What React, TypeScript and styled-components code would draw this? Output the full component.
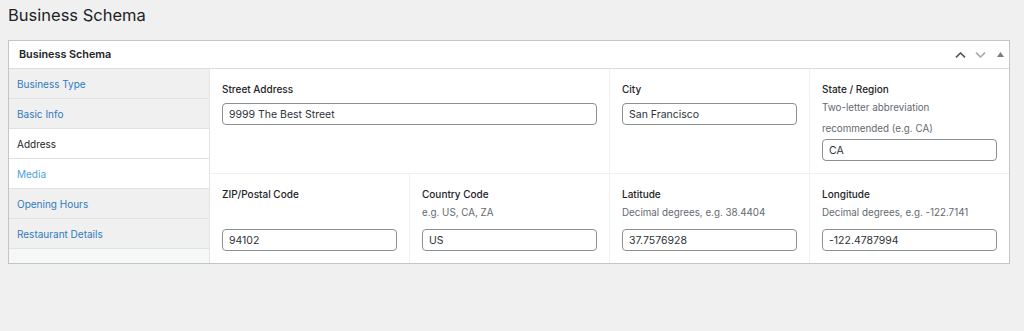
import React from "react";
import styled, { createGlobalStyle } from "styled-components";

const GlobalStyle = createGlobalStyle`
  body {
    margin: 0;
    background: #f0f0f1;
    font-family: Inter, "Liberation Sans", sans-serif;
    color: #1d2327;
  }
`;

const Page = styled.div`
  padding: 0 14px 0 8px;
`;

const Title = styled.h1`
  margin: 0;
  height: 40px;
  padding-top: 5px;
  box-sizing: border-box;
  font-size: 16.5px;
  font-weight: 400;
  line-height: 20px;
  color: #1d2327;
`;

const Box = styled.div`
  width: 1002px;
  box-sizing: border-box;
  background: #fff;
  border: 1px solid #c3c4c7;
`;

const BoxHeader = styled.div`
  height: 28px;
  box-sizing: border-box;
  display: flex;
  align-items: center;
  padding-left: 10px;
  border-bottom: 1px solid #dcdcde;
`;

const BoxTitle = styled.h2`
  flex: 1;
  margin: 0;
  font-size: 10.8px;
  font-weight: 600;
`;

const HeaderButtons = styled.div`
  display: flex;
  align-items: center;
  gap: 8px;
  padding-right: 3px;
`;

const IconButton = styled.span<{ $color: string }>`
  display: flex;
  width: 12px;
  height: 12px;
  align-items: center;
  justify-content: center;
  color: ${(p) => p.$color};
`;

const Body = styled.div`
  display: flex;
`;

const Tabs = styled.ul`
  list-style: none;
  margin: 0;
  padding: 0;
  width: 201px;
  box-sizing: border-box;
  border-right: 1px solid #e4e4e7;
  background: #f6f7f7;
`;

const Tab = styled.li<{ $active?: boolean; $hover?: boolean }>`
  height: 30px;
  box-sizing: border-box;
  display: flex;
  align-items: center;
  padding-left: 8px;
  font-size: 10px;
  border-bottom: 1px solid #e2e2e4;
  background: ${(p) => (p.$active || p.$hover ? "#fff" : "#f0f0f1")};
  color: ${(p) => (p.$active ? "#1d2327" : p.$hover ? "#4aa3df" : "#2f7bbd")};
`;

const Grid = styled.div`
  flex: 1;
  display: grid;
  grid-template-columns: 200px 200px 200px 1fr;
  grid-template-rows: auto 89px;
`;

const Cell = styled.div<{ $span?: number; $last?: boolean; $bottom?: boolean }>`
  grid-column: span ${(p) => p.$span ?? 1};
  display: flex;
  flex-direction: column;
  padding: 12px 12px 12px;
  box-sizing: border-box;
  border-right: ${(p) => (p.$last ? "none" : "1px solid #f0f0f1")};
  border-bottom: ${(p) => (p.$bottom ? "none" : "1px solid #f0f0f1")};
`;

const Label = styled.label`
  font-size: 10px;
  font-weight: 500;
  line-height: 16px;
  color: #1d2327;
`;

const Hint = styled.p`
  margin: 0;
  min-height: 21px;
  font-size: 9.8px;
  line-height: 21px;
  color: #646970;
`;

const Input = styled.input<{ $gap: string }>`
  margin-top: ${(p) => p.$gap};
  height: 22px;
  width: 100%;
  box-sizing: border-box;
  border: 1px solid #8c8f94;
  border-radius: 4px;
  padding: 0 6px;
  font-family: Inter, "Liberation Sans", sans-serif;
  font-size: 10.5px;
  color: #2c3338;
  background: #fff;
`;

type FieldProps = {
  label: string;
  value: string;
  hint?: React.ReactNode;
  span?: number;
  last?: boolean;
  bottom?: boolean;
};

const Field = ({ label, value, hint, span, last, bottom }: FieldProps) => (
  <Cell $span={span} $last={last} $bottom={bottom}>
    <Label>{label}</Label>
    {bottom ? <Hint>{hint}</Hint> : hint && <Hint>{hint}</Hint>}
    <Input
      $gap={bottom ? "auto" : hint ? "0" : "6px"}
      defaultValue={value}
    />
  </Cell>
);

const tabs = [
  "Business Type",
  "Basic Info",
  "Address",
  "Media",
  "Opening Hours",
  "Restaurant Details",
];

export default function App() {
  return (
    <Page>
      <GlobalStyle />
      <Title>Business Schema</Title>
      <Box>
        <BoxHeader>
          <BoxTitle>Business Schema</BoxTitle>
          <HeaderButtons>
            <IconButton $color="#50575e">
              <svg width="11" height="6" viewBox="0 0 11 6">
                <path d="M1 5.3 5.5 1 10 5.3" fill="none" stroke="currentColor" strokeWidth="1.6" />
              </svg>
            </IconButton>
            <IconButton $color="#a7aaad">
              <svg width="11" height="6" viewBox="0 0 11 6">
                <path d="M1 0.7 5.5 5 10 0.7" fill="none" stroke="currentColor" strokeWidth="1.6" />
              </svg>
            </IconButton>
            <IconButton $color="#787c82">
              <svg width="7" height="5" viewBox="0 0 7 5">
                <path d="M3.5 0 7 5H0z" fill="currentColor" />
              </svg>
            </IconButton>
          </HeaderButtons>
        </BoxHeader>
        <Body>
          <Tabs>
            {tabs.map((t) => (
              <Tab key={t} $active={t === "Address"} $hover={t === "Media"}>
                {t}
              </Tab>
            ))}
          </Tabs>
          <Grid>
            <Field label="Street Address" value="9999 The Best Street" span={2} />
            <Field label="City" value="San Francisco" />
            <Field
              label="State / Region"
              value="CA"
              last
              hint={
                <>
                  Two-letter abbreviation
                  <br />
                  recommended (e.g. CA)
                </>
              }
            />
            <Field label="ZIP/Postal Code" value="94102" bottom />
            <Field label="Country Code" value="US" hint="e.g. US, CA, ZA" bottom />
            <Field
              label="Latitude"
              value="37.7576928"
              hint="Decimal degrees, e.g. 38.4404"
              bottom
            />
            <Field
              label="Longitude"
              value="-122.4787994"
              hint="Decimal degrees, e.g. -122.7141"
              bottom
              last
            />
          </Grid>
        </Body>
      </Box>
    </Page>
  );
}
